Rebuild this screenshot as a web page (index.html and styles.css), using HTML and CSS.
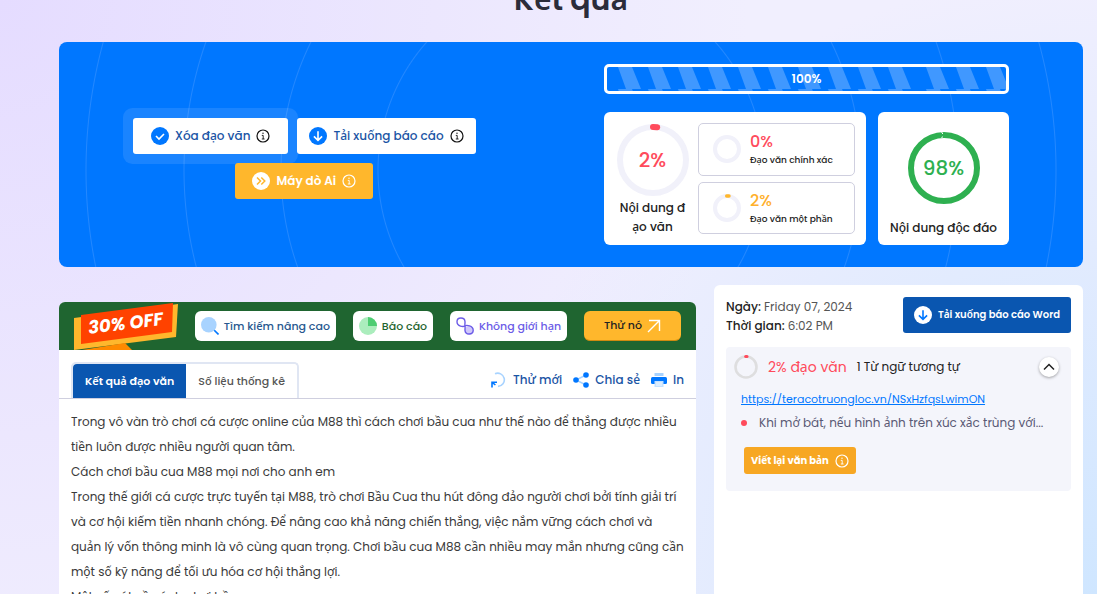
FILE: index.html
```html
<!DOCTYPE html>
<html lang="vi">
<head>
	<meta charset="utf-8">
	<meta name="viewport" content="width=device-width, initial-scale=1.0">
	<title>Kết quả</title>
	<link rel="stylesheet" href="styles.css">
</head>
<body>

	<!-- shared icons -->
	<svg class="defs" width="0" height="0">
		<symbol id="info" viewBox="0 0 14 14">
			<circle cx="7" cy="7" r="6" fill="none" stroke="currentColor" stroke-width="1.2"/>
			<path d="M5.8 6.4H7.2V10M5.8 10H8.6" fill="none" stroke="currentColor" stroke-width="0.9"/>
			<circle cx="7" cy="4.2" r="0.7" fill="currentColor"/>
		</symbol>
		<symbol id="down" viewBox="0 0 18 18">
			<circle cx="9" cy="9" r="9" fill="currentColor"/>
			<path class="mark" d="M9 4.2V13.3M4.9 9.4L9 13.4L13.1 9.4"/>
		</symbol>
	</svg>

	<h1 class="title">Kết quả</h1>

	<main class="page">
		<section class="hero">
			<div class="actions">
				<div class="row">
					<button class="btn btn-white halo">
						<svg class="ico" viewBox="0 0 18 18"><circle cx="9" cy="9" r="9" fill="#0077ff"/><path class="mark" d="M5 9L8 12L13 7"/></svg>
						Xóa đạo văn
						<svg class="info dark"><use href="#info"/></svg>
					</button>
					<button class="btn btn-white">
						<svg class="ico blue"><use href="#down"/></svg>
						Tải xuống báo cáo
						<svg class="info dark"><use href="#info"/></svg>
					</button>
				</div>
				<button class="btn btn-yellow">
					<svg class="ico" viewBox="0 0 18 18"><circle cx="9" cy="9" r="9" fill="#fff"/><path d="M5 5.5L8.5 9L5 12.5M9.3 5.5L12.8 9L9.3 12.5" fill="none" stroke="#ffb72c" stroke-width="1.5"/></svg>
					Máy dò Ai
					<svg class="info"><use href="#info"/></svg>
				</button>
			</div>

			<div class="stats">
				<div class="progress">
					<svg class="stripes">
						<defs>
							<pattern id="bars" width="308" height="22" patternUnits="userSpaceOnUse">
								<path fill="#4098ff" d="M11 0h14l9 22h-15zM41 0h14l9 22h-15zM71 0h14l9 22h-15zM101 0h14l9 22h-15zM131 0h14l9 22h-15zM161 0h14l9 22h-15zM191 0h14l9 22h-15zM221 0h14l9 22h-15zM251 0h14l9 22h-15zM281 0h14l9 22h-15z"/>
							</pattern>
						</defs>
						<rect width="100%" height="100%" fill="url(#bars)"/>
					</svg>
					<span>100%</span>
				</div>
				<div class="cards">
					<div class="card card-wide">
						<div class="score">
							<div class="ring">
								<svg viewBox="0 0 72 72">
									<circle cx="36" cy="36" r="33" fill="none" stroke="#f1f1fa" stroke-width="6"/>
									<path d="M36 3A33 33 0 0 1 40.2 3.3" fill="none" stroke="#ff4b5c" stroke-width="6" stroke-linecap="round"/>
								</svg>
								<span class="red">2%</span>
							</div>
							<p>Nội dung đ<br>ạo văn</p>
						</div>
						<div class="parts">
							<div class="part">
								<svg viewBox="0 0 28 28"><circle cx="14" cy="14" r="12" fill="none" stroke="#f1f1fa" stroke-width="4"/></svg>
								<div><b class="red">0%</b><span>Đạo văn chính xác</span></div>
							</div>
							<div class="part">
								<svg viewBox="0 0 28 28"><circle cx="14" cy="14" r="12" fill="none" stroke="#f1f1fa" stroke-width="4"/><path d="M13.7 2H16" fill="none" stroke="#ffb72c" stroke-width="3.5" stroke-linecap="round"/></svg>
								<div><b class="yellow">2%</b><span>Đạo văn một phần</span></div>
							</div>
						</div>
					</div>
					<div class="card card-unique">
						<div class="ring">
							<svg viewBox="0 0 72 72">
								<circle cx="36" cy="36" r="33" fill="none" stroke="#2eb050" stroke-width="6"/>
								<path d="M33.6 0L34.8 2M34.4 4.5L33.8 6" stroke="#fff" stroke-width="1"/>
							</svg>
							<span class="green">98%</span>
						</div>
						<p>Nội dung độc đáo</p>
					</div>
				</div>
			</div>
		</section>

		<div class="columns">
			<section class="result">
				<div class="promo">
					<svg class="off" viewBox="0 0 104 47">
						<path d="M0 15L104 1L102 34L0 47z" fill="#ffb72c"/>
						<path d="M8 47L51 40L58 47z" fill="#ff8a00"/>
						<path d="M7 12L99 0L98 29L7 41z" fill="#ff4200"/>
						<text x="15" y="31" transform="rotate(-7 15 31)">30% OFF</text>
					</svg>
					<span class="pill navy">
						<svg viewBox="0 0 18 18"><path d="M12.5 12.5L17.5 17.5" stroke="#0077ff" stroke-width="1.6"/><circle cx="7.8" cy="7.8" r="7.8" fill="#a8d3ff"/></svg>
						Tìm kiếm nâng cao
					</span>
					<span class="pill forest">
						<svg viewBox="0 0 18 18"><circle cx="9" cy="9" r="9" fill="#abedbd"/><path d="M9 0A9 9 0 0 1 18 9H9z" fill="#4dcd72"/></svg>
						Báo cáo
					</span>
					<span class="pill purple">
						<svg viewBox="0 0 18 18"><circle cx="13" cy="13.2" r="4.2" fill="#d0c8fb"/><path d="M8.8 8.7C7.6 10.2 1 9.5 1 4.8C1 -0.2 8.8 -0.2 9 4.8C9.1 6.7 8.6 7.3 9 9M9 9C10.2 7.8 17.2 8.3 17.2 13.2C17.2 18.2 9.2 18.2 9 13.2C8.9 11.3 9.3 10.7 9 9" fill="none" stroke="#6c5ce7" stroke-width="1.4"/></svg>
						Không giới hạn
					</span>
					<button class="try">
						Thử nó
						<svg viewBox="0 0 14 14"><path d="M2 1.5H12.5V12M12.5 1.5L1 13" fill="none" stroke="#fff" stroke-width="1.4"/></svg>
					</button>
				</div>

				<div class="bar">
					<div class="tabs">
						<button class="tab active">Kết quả đạo văn</button>
						<button class="tab">Số liệu thống kê</button>
					</div>
					<div class="tools">
						<button class="tool">
							<svg viewBox="0 0 16 16"><path d="M4 1.8A6.6 6.6 0 1 1 7 14.4" fill="none" stroke="#a8d3ff" stroke-width="1.6"/><path d="M1 15.5V10.2H6M1.2 10.4L4.4 13" fill="none" stroke="#0077ff" stroke-width="1.6"/></svg>
							Thử mới
						</button>
						<button class="tool">
							<svg viewBox="0 0 16 16"><path d="M13 3L3 8L13 13" fill="none" stroke="#a8d3ff" stroke-width="1.5"/><g fill="#0077ff"><circle cx="13" cy="3" r="2.8"/><circle cx="3" cy="8" r="2.8"/><circle cx="13" cy="13" r="2.8"/></g></svg>
							Chia sẻ
						</button>
						<button class="tool">
							<svg viewBox="0 0 16 16"><path d="M3.5 1H12.5V4H3.5z" fill="#a8d3ff"/><rect y="5" width="16" height="7" rx="1.5" fill="#0077ff"/><path d="M3.5 9H12.5V15H3.5z" fill="#c4e1ff"/><path d="M5 11H11M5 13H11" stroke="#fff" stroke-width="0.8"/></svg>
							In
						</button>
					</div>
				</div>

				<div class="text">
					<p>Trong vô vàn trò chơi cá cược online của M88 thì cách chơi bầu cua như thế nào để thắng được nhiều<br>
					tiền luôn được nhiều người quan tâm.</p>
					<p>Cách chơi bầu cua M88 mọi nơi cho anh em</p>
					<p>Trong thế giới cá cược trực tuyến tại M88, trò chơi Bầu Cua thu hút đông đảo người chơi bởi tính giải trí<br>
					và cơ hội kiếm tiền nhanh chóng. Để nâng cao khả năng chiến thắng, việc nắm vững cách chơi và<br>
					quản lý vốn thông minh là vô cùng quan trọng. Chơi bầu cua M88 cần nhiều may mắn nhưng cũng cần<br>
					một số kỹ năng để tối ưu hóa cơ hội thắng lợi.</p>
					<p>Một số nét về cách chơi bầu cua</p>
				</div>
			</section>

			<aside class="side">
				<div class="side-head">
					<p><b>Ngày:</b> Friday 07, 2024<br><b>Thời gian:</b> 6:02 PM</p>
					<button class="btn btn-word">
						<svg class="ico white"><use href="#down"/></svg>
						Tải xuống báo cáo Word
					</button>
				</div>
				<div class="source">
					<div class="source-head">
						<svg class="mini" viewBox="0 0 24 24"><circle cx="12" cy="12" r="10.5" fill="none" stroke="#dededf" stroke-width="2.6"/><path d="M11.7 1.6H13" stroke="#ff4b5c" stroke-width="3" stroke-linecap="round"/></svg>
						<span class="red">2% đạo văn</span>
						<span class="similar">1 Từ ngữ tương tự</span>
						<button class="fold" aria-label="Thu gọn"><svg viewBox="0 0 12 12"><path d="M1 8.5L6 3.5L11 8.5" fill="none" stroke="#222" stroke-width="1.5"/></svg></button>
					</div>
					<a class="link" href="https://teracotruongloc.vn/NSxHzfqsLwimON">https://teracotruongloc.vn/NSxHzfqsLwimON</a>
					<p class="match">Khi mở bát, nếu hình ảnh trên xúc xắc trùng với...</p>
					<button class="btn btn-rewrite">Viết lại văn bản <svg class="info"><use href="#info"/></svg></button>
				</div>
			</aside>
		</div>
	</main>

</body>
</html>
```
FILE: styles.css
```css
* {
	box-sizing: border-box;
}
body {
	margin: 0;
	height: 100vh;
	overflow: hidden;
	display: flex;
	flex-direction: column;
	font-family: Poppins, "Noto Sans", "Liberation Sans", sans-serif;
	font-size: 12px;
	color: #222;
	background: radial-gradient(circle at 100% 100%, #cfe6ff 0%, rgba(207, 230, 255, 0) 50%), radial-gradient(circle at 0% 0%, #e5dcff 0%, rgba(229, 220, 255, 0) 60%), #f1effe;
}
p, h1 {
	margin: 0;
}
button {
	font-family: inherit;
	border: 0;
	cursor: pointer;
}
.defs {
	position: absolute;
}
.red { color: #ff4b5c; }
.yellow { color: #ffb02c; }
.green { color: #2eb050; }

/* title */
.title {
	margin-top: -20px;
	padding: 0 14px 0 59px;
	text-align: center;
	font-size: 30px;
	line-height: 40px;
	font-weight: 600;
	color: #2b2c3a;
}
.page {
	flex: 1;
	display: flex;
	flex-direction: column;
	gap: 18px;
	padding: 22px 14px 0 59px;
}

/* hero */
.hero {
	display: flex;
	justify-content: space-between;
	align-items: center;
	padding: 22px 74px;
	border-radius: 8px;
	background: radial-gradient(circle at 50% 57%,
		transparent 192px, #2488ff 193px, transparent 194px,
		transparent 289px, #2488ff 290px, transparent 291px,
		transparent 386px, #2488ff 387px, transparent 388px,
		transparent 484px, #2488ff 485px, transparent 486px) #0077ff;
}
.actions {
	display: flex;
	flex-direction: column;
	align-items: center;
	gap: 9px;
	padding-top: 8px;
}
.row {
	display: flex;
	gap: 9px;
}
.btn {
	display: flex;
	align-items: center;
	justify-content: center;
	gap: 6px;
	height: 36px;
	padding: 0 12px;
	border-radius: 3px;
	font-size: 12px;
	font-weight: 500;
	white-space: nowrap;
	color: #fff;
}
.btn-white {
	padding: 0 12px;
	background: #fff;
	color: #1b55a5;
}
.halo {
	padding: 0 18px;
	box-shadow: 0 0 0 10px rgba(255, 255, 255, 0.1);
}
.btn-yellow {
	padding: 0 17px;
	background: #ffb72c;
	font-weight: 600;
}
.ico {
	width: 18px;
	height: 18px;
}
.info {
	width: 14px;
	height: 14px;
}
.dark { color: #111; }
.mark {
	fill: none;
	stroke: var(--mark, #fff);
	stroke-width: 1.6;
}
.blue { color: #0077ff; }
.white {
	--mark: #0077ff;
	color: #fff;
}

.stats {
	display: flex;
	flex-direction: column;
	gap: 18px;
	width: 405px;
}
.progress {
	position: relative;
	display: flex;
	align-items: center;
	justify-content: center;
	height: 30px;
	border: 3px solid #fff;
	border-radius: 5px;
	background: #0077ff;
	color: #fff;
	font-weight: 600;
}
.progress span {
	position: relative;
}
.stripes {
	position: absolute;
	top: 0;
	left: 0;
	width: 100%;
	height: 100%;
}
.cards {
	display: grid;
	grid-template-columns: 2fr 1fr;
	gap: 12px;
}
.card {
	height: 133px;
	border-radius: 6px;
	background: #fff;
	font-weight: 500;
	line-height: 19px;
	text-align: center;
}
.card-wide {
	display: flex;
	justify-content: space-between;
	padding: 11px 11px 11px 3px;
}
.card-unique {
	display: flex;
	flex-direction: column;
	align-items: center;
	justify-content: space-between;
	padding: 20px 0 8px;
}
.score {
	flex: 1;
}
.ring {
	display: grid;
	place-items: center;
	width: 72px;
	height: 72px;
	margin: 1px auto 2px;
	font-size: 20px;
}
.card-unique .ring {
	margin: 0;
}
.ring > * {
	grid-area: 1 / 1;
}
.parts {
	display: grid;
	gap: 6px;
	width: 157px;
}
.part {
	display: flex;
	align-items: center;
	gap: 9px;
	padding-left: 14px;
	border: 1px solid #cfcfdf;
	border-radius: 5px;
	text-align: left;
}
.part svg {
	width: 28px;
	height: 28px;
}
.part div {
	padding-top: 4px;
}
.part b, .part span {
	display: block;
}
.part b {
	font-size: 16px;
	font-weight: 500;
}
.part span {
	font-size: 9px;
}

/* columns */
.columns {
	flex: 1;
	display: grid;
	grid-template-columns: 1fr 369px;
	gap: 18px;
}
.result {
	margin-top: 17px;
	background: #fff;
	border-radius: 6px 6px 0 0;
}
.promo {
	display: flex;
	align-items: center;
	justify-content: space-between;
	height: 48px;
	padding: 0 15px;
	border-radius: 6px 6px 0 0;
	background: #1f6530;
}
.off {
	width: 104px;
	height: 47px;
}
.off text {
	font-size: 18px;
	font-weight: 700;
	font-style: italic;
	fill: #fff;
}
.pill, .try {
	display: flex;
	align-items: center;
	gap: 5px;
	height: 30px;
	padding: 0 6px;
	border-radius: 6px;
	background: #fff;
	font-size: 11px;
	font-weight: 500;
	white-space: nowrap;
}
.pill svg {
	width: 18px;
	height: 18px;
}
.navy { color: #27588f; }
.forest { color: #1f6530; }
.purple { color: #6c5ce7; }
.try {
	justify-content: center;
	width: 97px;
	background: #ffb72c;
	border-bottom: 1px solid #d08a10;
	color: #222;
}
.try svg {
	width: 14px;
	height: 14px;
}
.bar {
	display: flex;
	align-items: center;
	justify-content: space-between;
	height: 49px;
	padding: 12px 12px 0;
	border-bottom: 1px solid #cfcfdf;
}
.tabs {
	display: flex;
	align-self: stretch;
	border: 2px solid #e0e6f3;
	border-bottom: 0;
	border-radius: 5px 5px 0 0;
}
.tab {
	padding: 0 12px;
	background: #fff;
	font-size: 11px;
	font-weight: 500;
	color: #555;
	border-radius: 4px;
}
.active {
	background: #0a56b0;
	font-weight: 600;
	color: #fff;
	border-radius: 4px 0 0 0;
}
.tools {
	display: flex;
	gap: 11px;
}
.tool {
	display: flex;
	align-items: center;
	gap: 6px;
	padding: 0;
	background: none;
	font-size: 12px;
	font-weight: 500;
	color: #1b55a5;
}
.tool svg {
	width: 16px;
	height: 16px;
}
.text {
	padding: 10px 12px;
	font-size: 12px;
	line-height: 25px;
	white-space: nowrap;
	color: #3a3a3a;
}

/* side */
.side {
	padding: 12px;
	background: #fff;
	border-radius: 6px 6px 0 0;
}
.side-head {
	display: flex;
	justify-content: space-between;
	align-items: flex-start;
	font-size: 12px;
	line-height: 19px;
	color: #555;
}
.side-head b {
	font-weight: 500;
	color: #222;
}
.btn-word {
	padding: 0 11px;
	background: #0a56b0;
	font-size: 10px;
	font-weight: 600;
}
.source {
	margin-top: 12px;
	padding: 8px 12px 17px 8px;
	border-radius: 4px;
	background: #f4f5fb;
}
.source-head {
	display: flex;
	align-items: center;
	gap: 10px;
	height: 24px;
	font-size: 14px;
	font-weight: 400;
}
.mini {
	width: 24px;
	height: 24px;
}
.similar {
	font-size: 12px;
}
.fold {
	display: grid;
	place-items: center;
	width: 20px;
	height: 20px;
	margin-left: auto;
	padding: 0;
	border-radius: 50%;
	background: #fff;
	box-shadow: 0 1px 3px rgba(0, 0, 0, 0.35);
}
.fold svg {
	width: 12px;
	height: 12px;
}
.link {
	display: block;
	margin: 10px 0 0 7px;
	font-size: 11px;
	line-height: 20px;
	color: #0077ff;
}
.match {
	display: flex;
	align-items: center;
	gap: 12px;
	margin: 4px 0 14px 7px;
	line-height: 20px;
	white-space: nowrap;
	color: #5a5a75;
}
.match::before {
	content: "";
	width: 6px;
	height: 6px;
	border-radius: 50%;
	background: #ff4b5c;
}
.btn-rewrite {
	height: 27px;
	margin-left: 10px;
	padding: 0 7px;
	background: #f7a723;
	font-size: 10px;
	font-weight: 700;
}
```
